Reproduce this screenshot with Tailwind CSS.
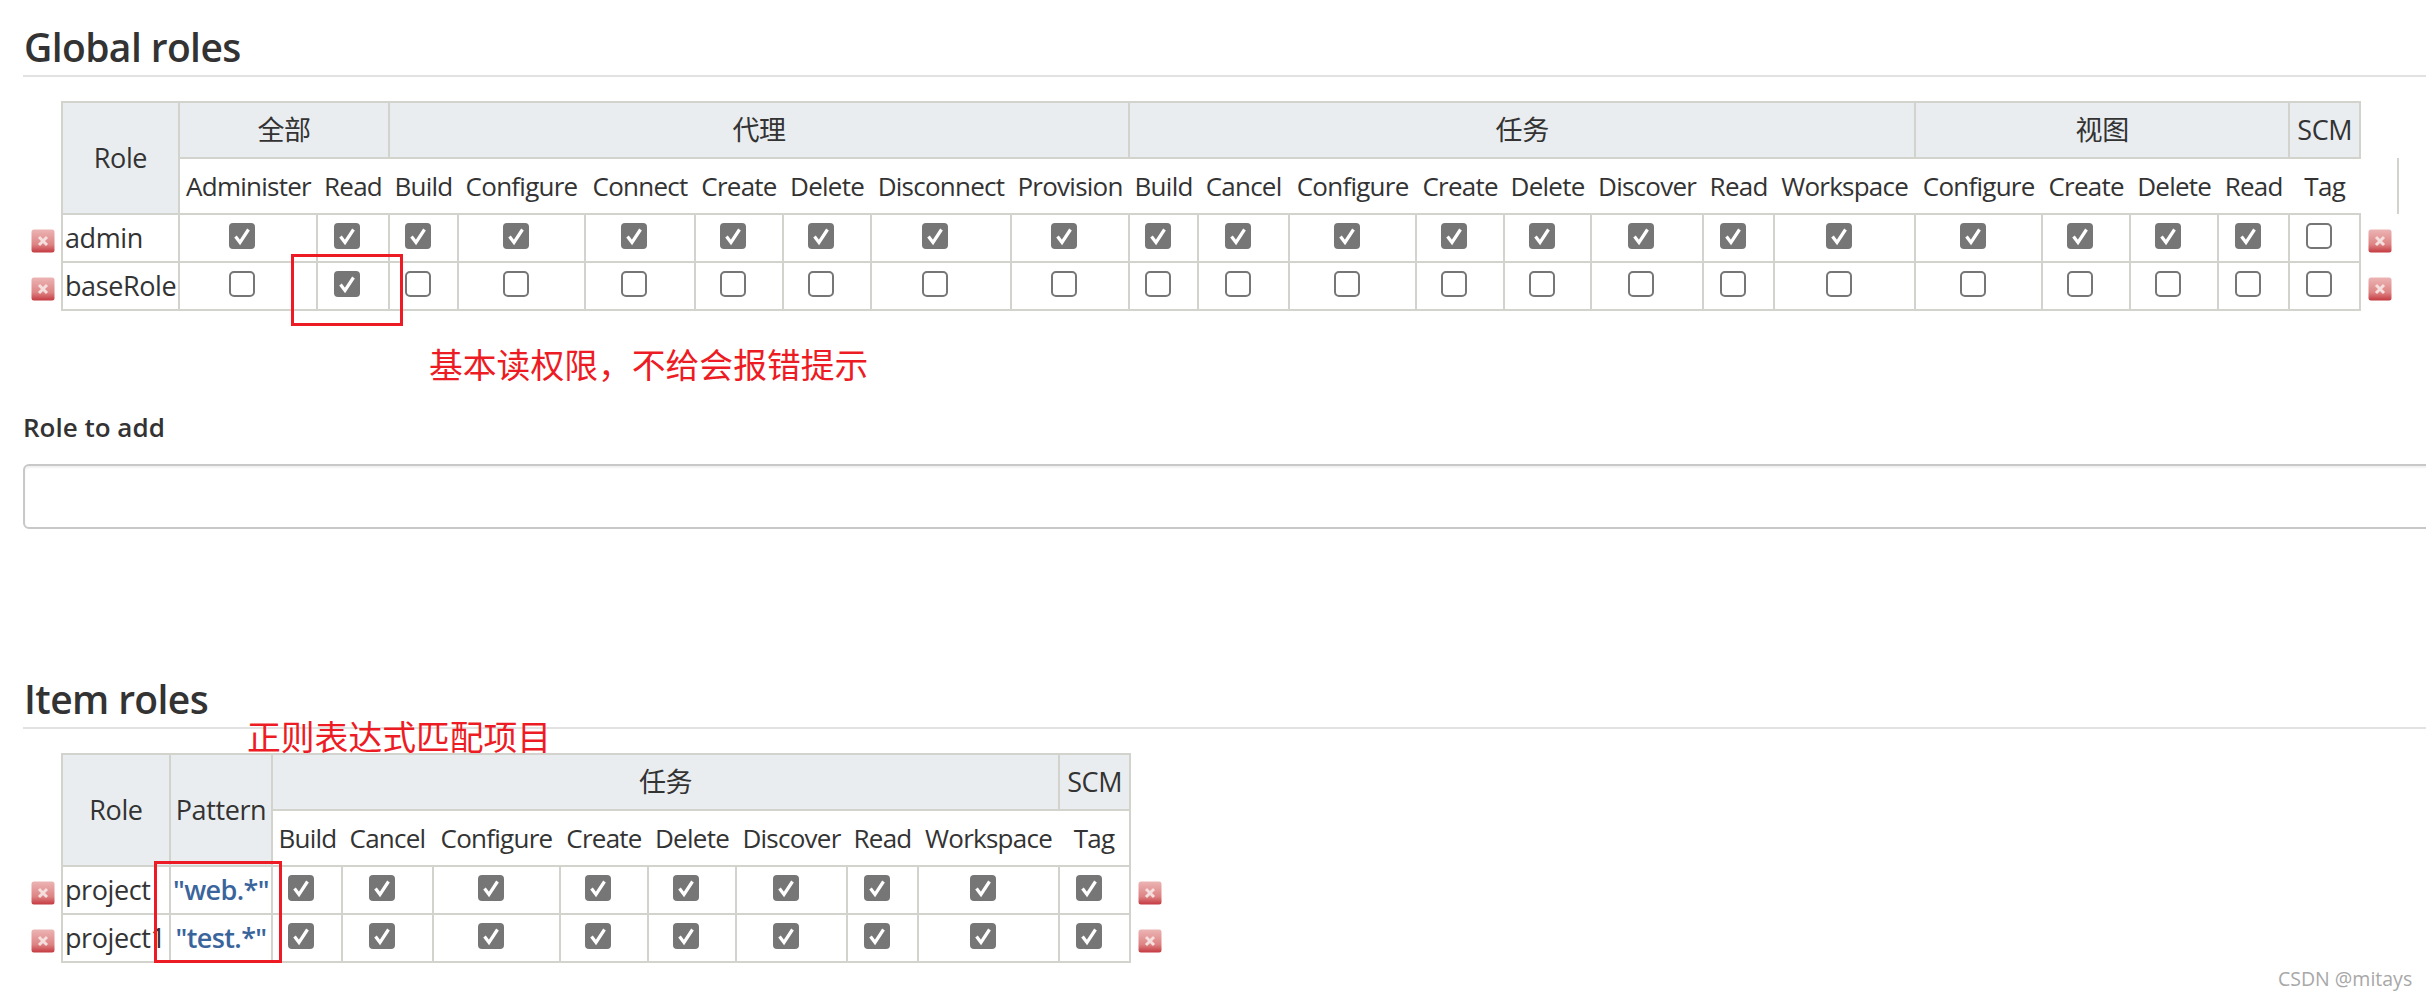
<!DOCTYPE html>
<html lang="en">
  <head>
    <meta charset="UTF-8" />
    <title>Role strategy</title>
    <script src="https://cdn.jsdelivr.net/npm/@tailwindcss/browser@4"></script>
  </head>
  <body class="relative h-[998px] overflow-hidden bg-white font-['Open_Sans','Noto_Sans_CJK_SC',sans-serif] text-[#333]">
    <svg class="absolute size-0">
      <defs>
        <linearGradient id="redfade" x1="0" y1="0" x2="0" y2="1">
          <stop offset="0" stop-color="#ecb4b4" />
          <stop offset="0.65" stop-color="#de8484" />
          <stop offset="1" stop-color="#c43a41" />
        </linearGradient>
      </defs>
      <symbol id="on" viewBox="0 0 26 26">
        <rect width="26" height="26" rx="4" fill="#767676" />
        <path d="M6.5 13.5l4.5 6 8.5-13" fill="none" stroke="#fff" stroke-width="3.2" />
      </symbol>
      <symbol id="off" viewBox="0 0 26 26">
        <rect x="1" y="1" width="24" height="24" rx="4" fill="#fff" stroke="#767676" stroke-width="2" />
      </symbol>
      <symbol id="del" viewBox="0 0 24 24">
        <rect x="0.5" y="0.5" width="23" height="23" rx="2.5" fill="url(#redfade)" />
        <path d="M8 8l8 8M16 8l-8 8" stroke="#f4dede" stroke-width="3" />
      </symbol>
    </svg>

    <main class="pl-[23px]">
      <h2 class="pl-[1px] pt-[23px] pb-[4px] text-[39px] leading-[48px] font-semibold tracking-[-0.6px] text-[#333]">Global roles</h2>
      <div class="h-[2px] bg-[#e2e2e2] mt-[0px]"></div>

      <table class="mt-[24px] table-fixed border-collapse w-[2375px] text-[26px] tracking-[-0.75px]">
        <colgroup>
          <col class="w-[39px]" /><col class="w-[117px]" /><col class="w-[138px]" /><col class="w-[72px]" /><col class="w-[69px]" /><col class="w-[127px]" /><col class="w-[110px]" /><col class="w-[88px]" /><col class="w-[88px]" /><col class="w-[140px]" /><col class="w-[118px]" /><col class="w-[69px]" /><col class="w-[91px]" /><col class="w-[127px]" /><col class="w-[88px]" /><col class="w-[87px]" /><col class="w-[112px]" /><col class="w-[71px]" /><col class="w-[141px]" /><col class="w-[127px]" /><col class="w-[88px]" /><col class="w-[88px]" /><col class="w-[71px]" /><col class="w-[71px]" /><col class="w-[38px]" />
        </colgroup>
        <thead>
          <tr class="h-[56px]">
            <td></td>
            <th rowspan="2" class="border-2 border-[#d3d3cd] bg-[#eaedf0] font-normal text-[27px] tracking-[-0.4px]">Role</th>
            <th colspan="2" class="border-2 border-[#d3d3cd] bg-[#eaedf0] font-normal text-[27px] tracking-[-0.4px]">全部</th>
            <th colspan="7" class="border-2 border-[#d3d3cd] bg-[#eaedf0] font-normal text-[27px] tracking-[-0.4px]">代理</th>
            <th colspan="8" class="border-2 border-[#d3d3cd] bg-[#eaedf0] font-normal text-[27px] tracking-[-0.4px]">任务</th>
            <th colspan="4" class="border-2 border-[#d3d3cd] bg-[#eaedf0] font-normal text-[27px] tracking-[-0.4px]">视图</th>
            <th class="border-2 border-[#d3d3cd] bg-[#eaedf0] font-normal text-[27px] tracking-[-0.4px]">SCM</th>
            <td></td>
          </tr>
          <tr class="h-[56px] font-normal">
            <td></td>
            <td class="text-center whitespace-nowrap">Administer</td><td class="text-center">Read</td>
            <td class="text-center">Build</td><td class="text-center">Configure</td><td class="text-center">Connect</td><td class="text-center">Create</td><td class="text-center">Delete</td><td class="text-center">Disconnect</td><td class="text-center">Provision</td>
            <td class="text-center">Build</td><td class="text-center">Cancel</td><td class="text-center">Configure</td><td class="text-center">Create</td><td class="text-center">Delete</td><td class="text-center">Discover</td><td class="text-center">Read</td><td class="text-center">Workspace</td>
            <td class="text-center">Configure</td><td class="text-center">Create</td><td class="text-center">Delete</td><td class="text-center">Read</td>
            <td class="text-center">Tag</td>
            <td class="border-r-2 border-[#d3d3cd]"></td>
          </tr>
        </thead>
        <tbody class="[&_td]:text-center [&_td]:leading-none">
          <tr class="h-[48px]">
            <td class="pl-[8px] pt-[6px]"><svg class="size-6"><use href="#del" /></svg></td>
            <td class="border-2 border-[#d3d3cd] !text-left pl-[2px] !leading-[44px] text-[27px] tracking-[-0.4px]">admin</td>
            <td class="border-2 border-[#d3d3cd] pr-[12px] pb-[7px]"><svg class="inline size-[26px]"><use href="#on" /></svg></td>
            <td class="border-2 border-[#d3d3cd] pr-[12px] pb-[7px]"><svg class="inline size-[26px]"><use href="#on" /></svg></td>
            <td class="border-2 border-[#d3d3cd] pr-[12px] pb-[7px]"><svg class="inline size-[26px]"><use href="#on" /></svg></td>
            <td class="border-2 border-[#d3d3cd] pr-[12px] pb-[7px]"><svg class="inline size-[26px]"><use href="#on" /></svg></td>
            <td class="border-2 border-[#d3d3cd] pr-[12px] pb-[7px]"><svg class="inline size-[26px]"><use href="#on" /></svg></td>
            <td class="border-2 border-[#d3d3cd] pr-[12px] pb-[7px]"><svg class="inline size-[26px]"><use href="#on" /></svg></td>
            <td class="border-2 border-[#d3d3cd] pr-[12px] pb-[7px]"><svg class="inline size-[26px]"><use href="#on" /></svg></td>
            <td class="border-2 border-[#d3d3cd] pr-[12px] pb-[7px]"><svg class="inline size-[26px]"><use href="#on" /></svg></td>
            <td class="border-2 border-[#d3d3cd] pr-[12px] pb-[7px]"><svg class="inline size-[26px]"><use href="#on" /></svg></td>
            <td class="border-2 border-[#d3d3cd] pr-[12px] pb-[7px]"><svg class="inline size-[26px]"><use href="#on" /></svg></td>
            <td class="border-2 border-[#d3d3cd] pr-[12px] pb-[7px]"><svg class="inline size-[26px]"><use href="#on" /></svg></td>
            <td class="border-2 border-[#d3d3cd] pr-[12px] pb-[7px]"><svg class="inline size-[26px]"><use href="#on" /></svg></td>
            <td class="border-2 border-[#d3d3cd] pr-[12px] pb-[7px]"><svg class="inline size-[26px]"><use href="#on" /></svg></td>
            <td class="border-2 border-[#d3d3cd] pr-[12px] pb-[7px]"><svg class="inline size-[26px]"><use href="#on" /></svg></td>
            <td class="border-2 border-[#d3d3cd] pr-[12px] pb-[7px]"><svg class="inline size-[26px]"><use href="#on" /></svg></td>
            <td class="border-2 border-[#d3d3cd] pr-[12px] pb-[7px]"><svg class="inline size-[26px]"><use href="#on" /></svg></td>
            <td class="border-2 border-[#d3d3cd] pr-[12px] pb-[7px]"><svg class="inline size-[26px]"><use href="#on" /></svg></td>
            <td class="border-2 border-[#d3d3cd] pr-[12px] pb-[7px]"><svg class="inline size-[26px]"><use href="#on" /></svg></td>
            <td class="border-2 border-[#d3d3cd] pr-[12px] pb-[7px]"><svg class="inline size-[26px]"><use href="#on" /></svg></td>
            <td class="border-2 border-[#d3d3cd] pr-[12px] pb-[7px]"><svg class="inline size-[26px]"><use href="#on" /></svg></td>
            <td class="border-2 border-[#d3d3cd] pr-[12px] pb-[7px]"><svg class="inline size-[26px]"><use href="#on" /></svg></td>
            <td class="border-2 border-[#d3d3cd] pr-[12px] pb-[7px]"><svg class="inline size-[26px]"><use href="#off" /></svg></td>
            <td class="pl-[7px] pt-[6px] !text-left"><svg class="size-6"><use href="#del" /></svg></td>
          </tr>
          <tr class="h-[48px]">
            <td class="pl-[8px] pt-[6px]"><svg class="size-6"><use href="#del" /></svg></td>
            <td class="border-2 border-[#d3d3cd] !text-left pl-[2px] !leading-[44px] text-[27px] tracking-[-0.4px]">baseRole</td>
            <td class="border-2 border-[#d3d3cd] pr-[12px] pb-[7px]"><svg class="inline size-[26px]"><use href="#off" /></svg></td>
            <td class="border-2 border-[#d3d3cd] pr-[12px] pb-[7px]"><svg class="inline size-[26px]"><use href="#on" /></svg></td>
            <td class="border-2 border-[#d3d3cd] pr-[12px] pb-[7px]"><svg class="inline size-[26px]"><use href="#off" /></svg></td>
            <td class="border-2 border-[#d3d3cd] pr-[12px] pb-[7px]"><svg class="inline size-[26px]"><use href="#off" /></svg></td>
            <td class="border-2 border-[#d3d3cd] pr-[12px] pb-[7px]"><svg class="inline size-[26px]"><use href="#off" /></svg></td>
            <td class="border-2 border-[#d3d3cd] pr-[12px] pb-[7px]"><svg class="inline size-[26px]"><use href="#off" /></svg></td>
            <td class="border-2 border-[#d3d3cd] pr-[12px] pb-[7px]"><svg class="inline size-[26px]"><use href="#off" /></svg></td>
            <td class="border-2 border-[#d3d3cd] pr-[12px] pb-[7px]"><svg class="inline size-[26px]"><use href="#off" /></svg></td>
            <td class="border-2 border-[#d3d3cd] pr-[12px] pb-[7px]"><svg class="inline size-[26px]"><use href="#off" /></svg></td>
            <td class="border-2 border-[#d3d3cd] pr-[12px] pb-[7px]"><svg class="inline size-[26px]"><use href="#off" /></svg></td>
            <td class="border-2 border-[#d3d3cd] pr-[12px] pb-[7px]"><svg class="inline size-[26px]"><use href="#off" /></svg></td>
            <td class="border-2 border-[#d3d3cd] pr-[12px] pb-[7px]"><svg class="inline size-[26px]"><use href="#off" /></svg></td>
            <td class="border-2 border-[#d3d3cd] pr-[12px] pb-[7px]"><svg class="inline size-[26px]"><use href="#off" /></svg></td>
            <td class="border-2 border-[#d3d3cd] pr-[12px] pb-[7px]"><svg class="inline size-[26px]"><use href="#off" /></svg></td>
            <td class="border-2 border-[#d3d3cd] pr-[12px] pb-[7px]"><svg class="inline size-[26px]"><use href="#off" /></svg></td>
            <td class="border-2 border-[#d3d3cd] pr-[12px] pb-[7px]"><svg class="inline size-[26px]"><use href="#off" /></svg></td>
            <td class="border-2 border-[#d3d3cd] pr-[12px] pb-[7px]"><svg class="inline size-[26px]"><use href="#off" /></svg></td>
            <td class="border-2 border-[#d3d3cd] pr-[12px] pb-[7px]"><svg class="inline size-[26px]"><use href="#off" /></svg></td>
            <td class="border-2 border-[#d3d3cd] pr-[12px] pb-[7px]"><svg class="inline size-[26px]"><use href="#off" /></svg></td>
            <td class="border-2 border-[#d3d3cd] pr-[12px] pb-[7px]"><svg class="inline size-[26px]"><use href="#off" /></svg></td>
            <td class="border-2 border-[#d3d3cd] pr-[12px] pb-[7px]"><svg class="inline size-[26px]"><use href="#off" /></svg></td>
            <td class="border-2 border-[#d3d3cd] pr-[12px] pb-[7px]"><svg class="inline size-[26px]"><use href="#off" /></svg></td>
            <td class="pl-[7px] pt-[6px] !text-left"><svg class="size-6"><use href="#del" /></svg></td>
          </tr>
        </tbody>
      </table>

      <label class="block mt-[100px] text-[26px] leading-[32px] font-semibold">Role to add</label>
      <div class="mt-[21px] h-[65px] w-[2440px] rounded-[6px] border-2 border-[#c8c8c8] bg-white shadow-[inset_0_2px_2px_rgba(0,0,0,0.06)]"></div>

      <h2 class="mt-[146px] pl-[1px] pb-[4px] text-[39px] leading-[48px] font-semibold tracking-[-0.6px] text-[#333]">Item roles</h2>
      <div class="h-[2px] bg-[#e2e2e2]"></div>

      <table class="mt-[24px] table-fixed border-collapse w-[1145px] text-[26px] tracking-[-0.75px]">
        <colgroup>
          <col class="w-[39px]" /><col class="w-[108px]" /><col class="w-[102px]" /><col class="w-[70px]" /><col class="w-[91px]" /><col class="w-[127px]" /><col class="w-[88px]" /><col class="w-[88px]" /><col class="w-[111px]" /><col class="w-[71px]" /><col class="w-[141px]" /><col class="w-[71px]" /><col class="w-[38px]" />
        </colgroup>
        <thead>
          <tr class="h-[56px]">
            <td></td>
            <th rowspan="2" class="border-2 border-[#d3d3cd] bg-[#eaedf0] font-normal text-[27px] tracking-[-0.4px]">Role</th>
            <th rowspan="2" class="border-2 border-[#d3d3cd] bg-[#eaedf0] font-normal text-[27px] tracking-[-0.4px]">Pattern</th>
            <th colspan="8" class="border-2 border-[#d3d3cd] bg-[#eaedf0] font-normal text-[27px] tracking-[-0.4px]">任务</th>
            <th class="border-2 border-[#d3d3cd] bg-[#eaedf0] font-normal text-[27px] tracking-[-0.4px]">SCM</th>
            <td></td>
          </tr>
          <tr class="h-[56px]">
            <td></td>
            <td class="text-center">Build</td><td class="text-center">Cancel</td><td class="text-center">Configure</td><td class="text-center">Create</td><td class="text-center">Delete</td><td class="text-center">Discover</td><td class="text-center">Read</td><td class="text-center">Workspace</td>
            <td class="text-center border-r-2 border-[#d3d3cd]">Tag</td>
            <td></td>
          </tr>
        </thead>
        <tbody class="[&_td]:text-center [&_td]:leading-none">
          <tr class="h-[48px]">
            <td class="pl-[8px] pt-[6px]"><svg class="size-6"><use href="#del" /></svg></td>
            <td class="border-2 border-[#d3d3cd] !text-left pl-[2px] !leading-[44px] whitespace-nowrap text-[27px] tracking-[-0.4px]">project</td>
            <td class="border-2 border-[#d3d3cd] !leading-[44px] font-semibold text-[#3a659c] whitespace-nowrap text-[27px] tracking-[-0.6px]">"web.*"</td>
            <td class="border-2 border-[#d3d3cd] pr-[12px] pb-[7px]"><svg class="inline size-[26px]"><use href="#on" /></svg></td>
            <td class="border-2 border-[#d3d3cd] pr-[12px] pb-[7px]"><svg class="inline size-[26px]"><use href="#on" /></svg></td>
            <td class="border-2 border-[#d3d3cd] pr-[12px] pb-[7px]"><svg class="inline size-[26px]"><use href="#on" /></svg></td>
            <td class="border-2 border-[#d3d3cd] pr-[12px] pb-[7px]"><svg class="inline size-[26px]"><use href="#on" /></svg></td>
            <td class="border-2 border-[#d3d3cd] pr-[12px] pb-[7px]"><svg class="inline size-[26px]"><use href="#on" /></svg></td>
            <td class="border-2 border-[#d3d3cd] pr-[12px] pb-[7px]"><svg class="inline size-[26px]"><use href="#on" /></svg></td>
            <td class="border-2 border-[#d3d3cd] pr-[12px] pb-[7px]"><svg class="inline size-[26px]"><use href="#on" /></svg></td>
            <td class="border-2 border-[#d3d3cd] pr-[12px] pb-[7px]"><svg class="inline size-[26px]"><use href="#on" /></svg></td>
            <td class="border-2 border-[#d3d3cd] pr-[12px] pb-[7px]"><svg class="inline size-[26px]"><use href="#on" /></svg></td>
            <td class="pl-[7px] pt-[6px] !text-left"><svg class="size-6"><use href="#del" /></svg></td>
          </tr>
          <tr class="h-[48px]">
            <td class="pl-[8px] pt-[6px]"><svg class="size-6"><use href="#del" /></svg></td>
            <td class="border-2 border-[#d3d3cd] !text-left pl-[2px] !leading-[44px] whitespace-nowrap text-[27px] tracking-[-0.4px]">project1</td>
            <td class="border-2 border-[#d3d3cd] !leading-[44px] font-semibold text-[#3a659c] whitespace-nowrap text-[27px] tracking-[-0.6px]">"test.*"</td>
            <td class="border-2 border-[#d3d3cd] pr-[12px] pb-[7px]"><svg class="inline size-[26px]"><use href="#on" /></svg></td>
            <td class="border-2 border-[#d3d3cd] pr-[12px] pb-[7px]"><svg class="inline size-[26px]"><use href="#on" /></svg></td>
            <td class="border-2 border-[#d3d3cd] pr-[12px] pb-[7px]"><svg class="inline size-[26px]"><use href="#on" /></svg></td>
            <td class="border-2 border-[#d3d3cd] pr-[12px] pb-[7px]"><svg class="inline size-[26px]"><use href="#on" /></svg></td>
            <td class="border-2 border-[#d3d3cd] pr-[12px] pb-[7px]"><svg class="inline size-[26px]"><use href="#on" /></svg></td>
            <td class="border-2 border-[#d3d3cd] pr-[12px] pb-[7px]"><svg class="inline size-[26px]"><use href="#on" /></svg></td>
            <td class="border-2 border-[#d3d3cd] pr-[12px] pb-[7px]"><svg class="inline size-[26px]"><use href="#on" /></svg></td>
            <td class="border-2 border-[#d3d3cd] pr-[12px] pb-[7px]"><svg class="inline size-[26px]"><use href="#on" /></svg></td>
            <td class="border-2 border-[#d3d3cd] pr-[12px] pb-[7px]"><svg class="inline size-[26px]"><use href="#on" /></svg></td>
            <td class="pl-[7px] pt-[6px] !text-left"><svg class="size-6"><use href="#del" /></svg></td>
          </tr>
        </tbody>
      </table>
    </main>

    <!-- annotations drawn over the screenshot -->
    <div class="absolute left-[291px] top-[254px] h-[72px] w-[112px] border-[3px] border-[#ed1c24]"></div>
    <div class="absolute left-[154px] top-[861px] h-[102px] w-[128px] border-[3px] border-[#ed1c24]"></div>
    <div class="absolute left-[429px] top-[340px] whitespace-nowrap text-[33.8px] leading-[48px] text-[#ed1c24] font-['Noto_Sans_CJK_SC',sans-serif]">基本读权限，不给会报错提示</div>
    <div class="absolute left-[247px] top-[712px] whitespace-nowrap text-[33.8px] leading-[48px] text-[#ed1c24] font-['Noto_Sans_CJK_SC',sans-serif]">正则表达式匹配项目</div>
    <div class="absolute left-[2278px] top-[967px] text-[19.5px] leading-[24px] text-[#a8a8a8]">CSDN @mitays</div>
  </body>
</html>
